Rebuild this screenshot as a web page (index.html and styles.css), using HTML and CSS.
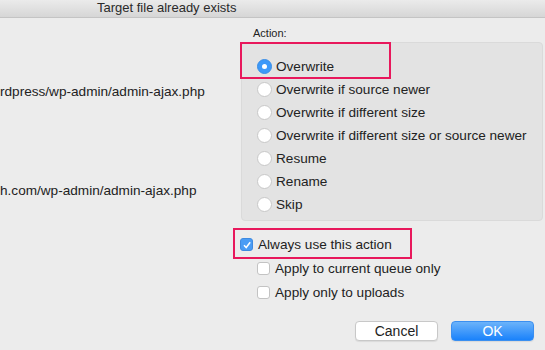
FILE: index.html
```html
<!DOCTYPE html>
<html>
<head>
  <title>Target file already exists</title>
  <link rel="stylesheet" href="styles.css">
</head>
<body>
  <div class="titlebar">Target file already exists</div>
  <div class="dialog">
    <div class="files">
      <p class="path first">rdpress/wp-admin/admin-ajax.php</p>
      <p class="path second">h.com/wp-admin/admin-ajax.php</p>
    </div>
    <div class="options">
      <div class="label">Action:</div>
      <div class="group">
        <div class="row"><span class="radio on"></span>Overwrite</div>
        <div class="row"><span class="radio"></span>Overwrite if source newer</div>
        <div class="row"><span class="radio"></span>Overwrite if different size</div>
        <div class="row"><span class="radio"></span>Overwrite if different size or source newer</div>
        <div class="row"><span class="radio"></span>Resume</div>
        <div class="row"><span class="radio"></span>Rename</div>
        <div class="row"><span class="radio"></span>Skip</div>
      </div>
      <div class="row check-main"><span class="check on"><svg width="10" height="10" viewBox="0 0 10 10"><path d="M2 5.2 L4.2 7.5 L8.2 2.3" fill="none" stroke="#fff" stroke-width="1.5"/></svg></span>Always use this action</div>
      <div class="row sub"><span class="check"></span>Apply to current queue only</div>
      <div class="row sub"><span class="check"></span>Apply only to uploads</div>
    </div>
  </div>
  <div class="buttons">
    <button class="btn">Cancel</button>
    <button class="btn primary">OK</button>
  </div>
  <!-- annotation boxes -->
  <div class="mark mark-overwrite"></div>
  <div class="mark mark-always"></div>
</body>
</html>
```

FILE: styles.css
```css
body {
  font-family: "Liberation Sans", Arial, sans-serif;
  font-size: 13.6px;
  color: #222;
  background-color: #ececec;
  margin: 0;
  padding: 0;
  width: 545px;
  height: 350px;
  overflow: hidden;
  position: relative;
}
.titlebar {
  height: 17px;
  line-height: 16px;
  font-size: 13px;
  padding-left: 97px;
  background: linear-gradient(#ebebeb, #d6d6d6);
  border-bottom: 1px solid #c4c4c4;
  color: #2a2a2a;
}
.dialog {
  display: flex;
}
.files {
  width: 241px;
}
.path {
  margin: 0;
  white-space: nowrap;
}
.path.first {
  margin-top: 66px;
}
.path.second {
  margin-top: 84px;
}
.options {
  width: 302px;
}
.label {
  font-size: 11px;
  padding-left: 12px;
  height: 24px;
  line-height: 30px;
}
.group {
  background-color: #e3e3e3;
  border: 1px solid #dadada;
  border-radius: 4px;
  padding: 12px 0 4px 15px;
  height: 161px;
}
.row {
  display: flex;
  align-items: center;
  height: 23px;
  white-space: nowrap;
}
.radio {
  width: 15px;
  height: 15px;
  border-radius: 50%;
  background-color: #fff;
  border: 1px solid #c8c8c8;
  box-sizing: border-box;
  margin-right: 4px;
  flex-shrink: 0;
}
.radio.on {
  background-color: #3d99f9;
  border-color: #3a8ee6;
  position: relative;
}
.radio.on::after {
  content: "";
  position: absolute;
  left: 4px;
  top: 4px;
  width: 5px;
  height: 5px;
  border-radius: 50%;
  background-color: #fff;
}
.check {
  width: 13px;
  height: 13px;
  border-radius: 3px;
  background-color: #fff;
  border: 1px solid #c3c3c3;
  box-sizing: border-box;
  margin-right: 5px;
  flex-shrink: 0;
  display: flex;
  align-items: center;
  justify-content: center;
}
.check.on {
  background-color: #4a9cf5;
  border-color: #3f8ae0;
}
.check-main {
  margin-top: 12px;
  margin-left: -1px;
}
.sub {
  margin-left: 16px;
  height: 24px;
}
.buttons {
  display: flex;
  justify-content: flex-end;
  gap: 13px;
  padding: 17px 11px 0 0;
}
.btn {
  font-family: "Liberation Sans", Arial, sans-serif;
  font-size: 14px;
  width: 83px;
  height: 20px;
  padding: 0;
  border: 1px solid #c8c8c8;
  border-radius: 4px;
  background-color: #fff;
  color: #222;
  box-shadow: 0 1px 1px rgba(0, 0, 0, 0.08);
}
.btn.primary {
  background: linear-gradient(#6cb3fa, #1a82fb);
  border-color: #3b8ff0;
  color: #fff;
}
.mark {
  position: absolute;
  border: 2px solid #e8185c;
  box-sizing: border-box;
}
.mark-overwrite {
  left: 240px;
  top: 42px;
  width: 151px;
  height: 37px;
}
.mark-always {
  left: 233px;
  top: 228px;
  width: 179px;
  height: 31px;
}
```
